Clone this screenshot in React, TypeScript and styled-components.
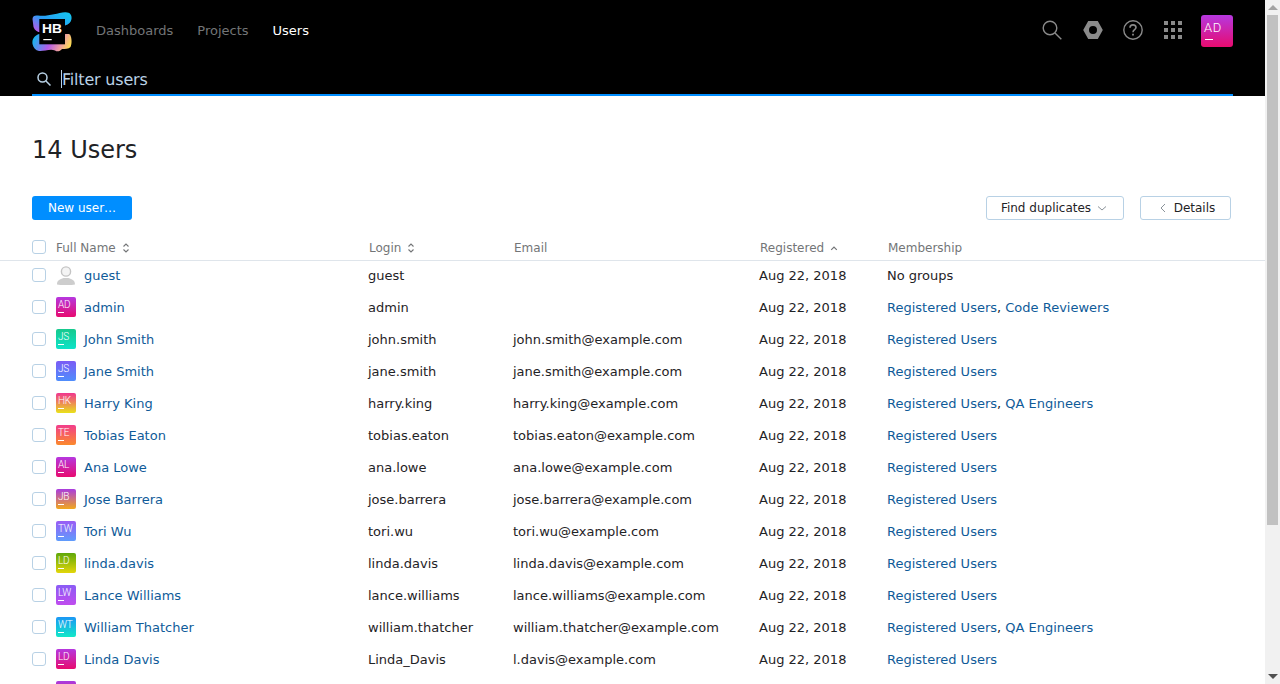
import styled, { createGlobalStyle } from 'styled-components'

const GlobalStyle = createGlobalStyle`
    html {
        overflow: hidden;
    }
    body {
        margin: 0;
        background: #fff;
        color: #1f2326;
        font-family: "DejaVu Sans", sans-serif;
        font-size: 13px;
    }
`

const Page = styled.div`
    display: flex;
    height: 100vh;
    overflow: hidden;
`

const Content = styled.div`
    flex: 1;
    min-width: 0;
    overflow: hidden;
`

const ScrollTrack = styled.div`
    width: 15px;
    flex: none;
    background: #f1f1f1;
    display: flex;
    flex-direction: column;
    align-items: center;
`

const ScrollArrow = styled.div<{ $down?: boolean }>`
    height: 15px;
    flex: none;
    display: flex;
    align-items: center;
    justify-content: center;

    &::before {
        content: '';
        border-left: 5px solid transparent;
        border-right: 5px solid transparent;
        ${(p) => (p.$down ? 'border-top: 5px solid #505050;' : 'border-bottom: 5px solid #a3a3a3;')}
    }
`

const ScrollThumb = styled.div`
    width: 11px;
    height: 510px;
    flex: none;
    background: #c1c1c1;
`

const Spacer = styled.div`
    flex: 1;
`

const Header = styled.header`
    background: #000;
    height: 96px;
    padding: 0 32px;
    box-sizing: border-box;
`

const TopBar = styled.div`
    height: 64px;
    display: flex;
    align-items: center;
`

const Logo = styled.svg`
    width: 40px;
    height: 40px;
    margin-right: 24px;
    flex: none;
`

const NavLink = styled.a<{ $active?: boolean }>`
    color: ${(p) => (p.$active ? '#fff' : '#737577')};
    margin-right: 24px;
    margin-top: -2px;
    line-height: 20px;
`

const HeaderIcons = styled.div`
    display: flex;
    align-items: center;
    gap: 20px;
    margin-top: -2px;
`

const HeaderIcon = styled.svg<{ $gapAfter?: number }>`
    width: 20px;
    height: 20px;
    display: block;
    margin-top: -2px;
    margin-right: ${(p) => p.$gapAfter ?? 0}px;
`

const Avatar = styled.div<{ $size: number; $from: string; $to: string }>`
    position: relative;
    width: ${(p) => p.$size}px;
    height: ${(p) => p.$size}px;
    flex: none;
    box-sizing: border-box;
    border-radius: ${(p) => (p.$size > 20 ? 3 : 2)}px;
    background: linear-gradient(180deg, ${(p) => p.$from}, ${(p) => p.$to});
    color: #fff;
    font-family: Roboto, sans-serif;
    font-weight: 300;
    font-size: ${(p) => (p.$size > 20 ? 13 : 10)}px;
    letter-spacing: ${(p) => (p.$size > 20 ? 0.5 : -0.3)}px;
    line-height: ${(p) => (p.$size > 20 ? 25 : 15)}px;
    padding-left: ${(p) => (p.$size > 20 ? 3 : 2)}px;

    &::after {
        content: '';
        position: absolute;
        left: ${(p) => (p.$size > 20 ? 4 : 2)}px;
        bottom: ${(p) => (p.$size > 20 ? 7 : 4)}px;
        width: ${(p) => (p.$size > 20 ? 8 : 6)}px;
        height: 1px;
        background: #fff;
    }
`

const HeaderAvatarSlot = styled.div`
    margin-left: -2px;
`

const SearchBar = styled.div`
    height: 30px;
    display: flex;
    align-items: center;
    border-bottom: 2px solid #008eff;
`

const SearchIcon = styled.svg`
    width: 16px;
    height: 16px;
    margin-left: 4px;
    margin-right: 9px;
    flex: none;
`

const Caret = styled.span`
    width: 1px;
    height: 18px;
    background: #b8d1e5;
    flex: none;
`

const FilterText = styled.span`
    color: #b8d1e5;
    font-size: 16px;
    text-rendering: geometricPrecision;
    letter-spacing: -0.2px;
    line-height: 24px;
    flex: 1;
    margin-top: 1px;
`

const Main = styled.main`
    padding-top: 38px;
`

const Title = styled.h1`
    margin: 0 0 30px 32px;
    font-size: 24px;
    font-weight: 400;
    line-height: 32px;
    color: #1f2326;
`

const Toolbar = styled.div`
    display: flex;
    align-items: center;
    padding: 0 34px 0 32px;
    gap: 16px;
    margin-bottom: 20px;
`

const PrimaryButton = styled.button`
    width: 100px;
    height: 24px;
    border: 0;
    border-radius: 3px;
    background: #008eff;
    color: #fff;
    font: inherit;
    font-size: 12px;
    padding: 0;
`

const GhostButton = styled.button<{ $width: number; $left?: number; $right?: number }>`
    width: ${(p) => p.$width}px;
    height: 24px;
    box-sizing: border-box;
    border: 1px solid #b8d1e5;
    border-radius: 3px;
    background: #fff;
    color: #1f2326;
    font: inherit;
    font-size: 12px;
    padding: 0 ${(p) => p.$right ?? 0}px 0 ${(p) => p.$left ?? 0}px;
    display: flex;
    align-items: center;
    justify-content: center;
    gap: 6px;
`

const Chevron = styled.svg`
    width: 10px;
    height: 10px;
    flex: none;
`

const Grid = styled.div`
    display: grid;
    grid-template-columns: 24px 312px 145px 246px 128px 1fr;
    align-items: center;
    padding-left: 32px;
`

const HeadRow = styled(Grid)`
    height: 20px;
    border-bottom: 1px solid #dfe5eb;
    color: #737577;
    font-size: 12px;
    line-height: 14px;
    margin-bottom: -2px;
`

const HeadCell = styled.div<{ $shift?: boolean }>`
    display: flex;
    align-items: center;
    gap: 6px;
    padding-left: ${(p) => (p.$shift ? 1 : 0)}px;
    margin-top: -5px;
`

const SortIcon = styled.svg`
    width: 8px;
    height: 10px;
    flex: none;
`

const Row = styled(Grid)`
    height: 32px;
`

const Checkbox = styled.span<{ $head?: boolean }>`
    display: block;
    width: 14px;
    height: 14px;
    box-sizing: border-box;
    border: 1px solid #b8d1e5;
    border-radius: 3px;
    background: #fff;
    margin-top: ${(p) => (p.$head ? -7 : 0)}px;
`

const NameCell = styled.div`
    display: flex;
    align-items: center;
    gap: 8px;
`

const UserLink = styled.a`
    color: #0f5b99;
`

const Cell = styled.div`
    white-space: nowrap;
`

const Ghost = styled.svg`
    width: 20px;
    height: 20px;
    flex: none;
    display: block;
`

type User = {
    name: string
    login: string
    email: string
    initials: string
    from: string
    to: string
    groups: string[]
}

const users: User[] = [
    { name: 'admin', login: 'admin', email: '', initials: 'AD', from: '#b638e0', to: '#e80b6f', groups: ['Registered Users', 'Code Reviewers'] },
    { name: 'John Smith', login: 'john.smith', email: 'john.smith@example.com', initials: 'JS', from: '#17c98d', to: '#0de3c8', groups: ['Registered Users'] },
    { name: 'Jane Smith', login: 'jane.smith', email: 'jane.smith@example.com', initials: 'JS', from: '#7b5cf5', to: '#4f8efc', groups: ['Registered Users'] },
    { name: 'Harry King', login: 'harry.king', email: 'harry.king@example.com', initials: 'HK', from: '#f0358f', to: '#e9e21a', groups: ['Registered Users', 'QA Engineers'] },
    { name: 'Tobias Eaton', login: 'tobias.eaton', email: 'tobias.eaton@example.com', initials: 'TE', from: '#f23d8c', to: '#fb8a2c', groups: ['Registered Users'] },
    { name: 'Ana Lowe', login: 'ana.lowe', email: 'ana.lowe@example.com', initials: 'AL', from: '#b638e0', to: '#e80b6f', groups: ['Registered Users'] },
    { name: 'Jose Barrera', login: 'jose.barrera', email: 'jose.barrera@example.com', initials: 'JB', from: '#a93ce0', to: '#f2a81c', groups: ['Registered Users'] },
    { name: 'Tori Wu', login: 'tori.wu', email: 'tori.wu@example.com', initials: 'TW', from: '#9a5cf5', to: '#5f9cfc', groups: ['Registered Users'] },
    { name: 'linda.davis', login: 'linda.davis', email: 'linda.davis@example.com', initials: 'LD', from: '#5fa80a', to: '#e3d60a', groups: ['Registered Users'] },
    { name: 'Lance Williams', login: 'lance.williams', email: 'lance.williams@example.com', initials: 'LW', from: '#8a5cf5', to: '#c04cee', groups: ['Registered Users'] },
    { name: 'William Thatcher', login: 'william.thatcher', email: 'william.thatcher@example.com', initials: 'WT', from: '#1b97f5', to: '#12e8c8', groups: ['Registered Users', 'QA Engineers'] },
    { name: 'Linda Davis', login: 'Linda_Davis', email: 'l.davis@example.com', initials: 'LD', from: '#b638e0', to: '#e80b6f', groups: ['Registered Users'] },
]

const Sort = () => (
    <SortIcon viewBox='0 0 8 10' fill='none' stroke='#737577' strokeWidth='1.1'>
        <path d='M1.5 3.5 L4 1 L6.5 3.5' />
        <path d='M1.5 6.5 L4 9 L6.5 6.5' />
    </SortIcon>
)

const SortUp = () => (
    <SortIcon viewBox='0 0 8 10' fill='none' stroke='#737577' strokeWidth='1.2'>
        <path d='M1.2 6.8 L4 4 L6.8 6.8' />
    </SortIcon>
)

const App = () => {
    return (
        <Page>
            <GlobalStyle />
            <Content>
                <Header>
                    <TopBar>
                        <Logo viewBox='0 0 40 40'>
                            <defs>
                                <linearGradient id='logoTop' x1='0' y1='0.8' x2='1' y2='0'>
                                    <stop offset='0' stopColor='#b45be8' />
                                    <stop offset='0.4' stopColor='#2a9df5' />
                                    <stop offset='1' stopColor='#12c8ec' />
                                </linearGradient>
                                <linearGradient id='logoBottom' x1='0' y1='0.4' x2='1' y2='0.6'>
                                    <stop offset='0' stopColor='#14b6ee' />
                                    <stop offset='0.45' stopColor='#b45be8' />
                                    <stop offset='0.75' stopColor='#f0a0a0' />
                                    <stop offset='1' stopColor='#fde04e' />
                                </linearGradient>
                            </defs>
                            <path d='M0.5 7 C0.5 4 3 3 6 3.5 C15 5 25 1 33 0.3 C38 0 40 3 39.5 7 C39 10 37 12.5 33 13.5 L12 20 C6 21 3 19 1.5 15 Z' fill='url(#logoTop)' />
                            <path d='M0.5 32 C0 27 2 24 7 22 L30 24 C32 22 35 21.5 38 22.5 C40 26 40 32 38.5 35 C36.5 37 33 37 30 37 C28 39.5 25 40 23 38.5 C18 36.5 12 39.5 7 39 C3.5 38.5 1.5 36 0.5 32 Z' fill='url(#logoBottom)' />
                            <rect x='7.3' y='7' width='25.7' height='25.3' fill='#000' />
                            <text x='10' y='21.3' fill='#fff' fontFamily='"Liberation Sans", sans-serif' fontSize='12' fontWeight='700' textLength='20' lengthAdjust='spacingAndGlyphs'>HB</text>
                            <rect x='11.3' y='27' width='8.4' height='1.2' fill='#fff' />
                        </Logo>
                        <NavLink>Dashboards</NavLink>
                        <NavLink>Projects</NavLink>
                        <NavLink $active>Users</NavLink>
                        <Spacer />
                        <HeaderIcons>
                            <HeaderIcon $gapAfter={1} viewBox='0 0 20 20' fill='none' stroke='#8a8a8a' strokeWidth='1.4'>
                                <circle cx='8' cy='8' r='6.8' />
                                <path d='M13 13 L19.3 19.3' />
                            </HeaderIcon>
                            <HeaderIcon viewBox='0 0 20 20'>
                                <path
                                    fillRule='evenodd'
                                    fill='#8a8a8a'
                                    d='M5.2 1 H14.8 L19.8 10 L14.8 19 H5.2 L0.2 10 Z M10 6 A4 4 0 1 0 10 14 A4 4 0 1 0 10 6 Z'
                                />
                            </HeaderIcon>
                            <HeaderIcon viewBox='0 0 20 20' fill='none' stroke='#8a8a8a' strokeWidth='1.4'>
                                <circle cx='10' cy='10' r='9.2' />
                                <path d='M7 7.8 C7 5.8 8.4 4.9 10 4.9 C11.7 4.9 13 6 13 7.6 C13 9.6 10 9.8 10 12.2' strokeWidth='1.6' />
                                <path d='M10 13.8 V15.6' strokeWidth='1.8' />
                            </HeaderIcon>
                            <HeaderIcon viewBox='0 0 20 20' fill='#8a8a8a'>
                                <rect x='1' y='1' width='4' height='4' />
                                <rect x='8' y='1' width='4' height='4' />
                                <rect x='15' y='1' width='4' height='4' />
                                <rect x='1' y='8' width='4' height='4' />
                                <rect x='8' y='8' width='4' height='4' />
                                <rect x='15' y='8' width='4' height='4' />
                                <rect x='1' y='15' width='4' height='4' />
                                <rect x='8' y='15' width='4' height='4' />
                                <rect x='15' y='15' width='4' height='4' />
                            </HeaderIcon>
                            <HeaderAvatarSlot>
                                <Avatar $size={32} $from='#b638e0' $to='#e80b6f'>AD</Avatar>
                            </HeaderAvatarSlot>
                        </HeaderIcons>
                    </TopBar>
                    <SearchBar>
                        <SearchIcon viewBox='0 0 16 16' fill='none' stroke='#b8d1e5' strokeWidth='1.5'>
                            <circle cx='6.5' cy='6.5' r='4.5' />
                            <path d='M10 10 L14.5 14.5' />
                        </SearchIcon>
                        <Caret />
                        <FilterText>Filter users</FilterText>
                    </SearchBar>
                </Header>
                <Main>
                    <Title>14 Users</Title>
                    <Toolbar>
                        <PrimaryButton>New user…</PrimaryButton>
                        <Spacer />
                        <GhostButton $width={138} $right={2}>
                            Find duplicates
                            <Chevron viewBox='0 0 10 10' fill='none' stroke='#8a9299' strokeWidth='1'>
                                <path d='M1 3.5 L5 7 L9 3.5' />
                            </Chevron>
                        </GhostButton>
                        <GhostButton $width={91} $left={2}>
                            <Chevron viewBox='0 0 10 10' fill='none' stroke='#8a9299' strokeWidth='1'>
                                <path d='M7 1 L3 5 L7 9' />
                            </Chevron>
                            Details
                        </GhostButton>
                    </Toolbar>
                    <HeadRow>
                        <Checkbox $head />
                        <HeadCell>Full Name <Sort /></HeadCell>
                        <HeadCell $shift>Login <Sort /></HeadCell>
                        <HeadCell $shift>Email</HeadCell>
                        <HeadCell $shift>Registered <SortUp /></HeadCell>
                        <HeadCell $shift>Membership</HeadCell>
                    </HeadRow>
                    <Row>
                        <Checkbox />
                        <NameCell>
                            <Ghost viewBox='0 0 20 20'>
                                <path d='M1 19.5 C1 15 4 14.5 7.5 13 H12.5 C16 14.5 19 15 19 19.5 C14 20.5 6 20.5 1 19.5 Z' fill='#cdcdcd' />
                                <circle cx='10' cy='6.5' r='4.6' fill='#f4f4f4' stroke='#c4c4c4' strokeWidth='1.4' />
                            </Ghost>
                            <UserLink>guest</UserLink>
                        </NameCell>
                        <Cell>guest</Cell>
                        <Cell />
                        <Cell>Aug 22, 2018</Cell>
                        <Cell>No groups</Cell>
                    </Row>
                    {users.map((u) => (
                        <Row key={u.login}>
                            <Checkbox />
                            <NameCell>
                                <Avatar $size={20} $from={u.from} $to={u.to}>{u.initials}</Avatar>
                                <UserLink>{u.name}</UserLink>
                            </NameCell>
                            <Cell>{u.login}</Cell>
                            <Cell>{u.email}</Cell>
                            <Cell>Aug 22, 2018</Cell>
                            <Cell>
                                {u.groups.map((g, i) => (
                                    <span key={g}>
                                        {i > 0 && ', '}
                                        <UserLink>{g}</UserLink>
                                    </span>
                                ))}
                            </Cell>
                        </Row>
                    ))}
                    {/* the 14th row only just enters the frame: its avatar top is all that shows */}
                    <Row>
                        <Checkbox />
                        <NameCell>
                            <Avatar $size={20} $from='#a93ce0' $to='#e80b6f' />
                        </NameCell>
                    </Row>
                </Main>
            </Content>
            <ScrollTrack>
                <ScrollArrow />
                <ScrollThumb />
                <Spacer />
                <ScrollArrow $down />
            </ScrollTrack>
        </Page>
    )
}

export default App
